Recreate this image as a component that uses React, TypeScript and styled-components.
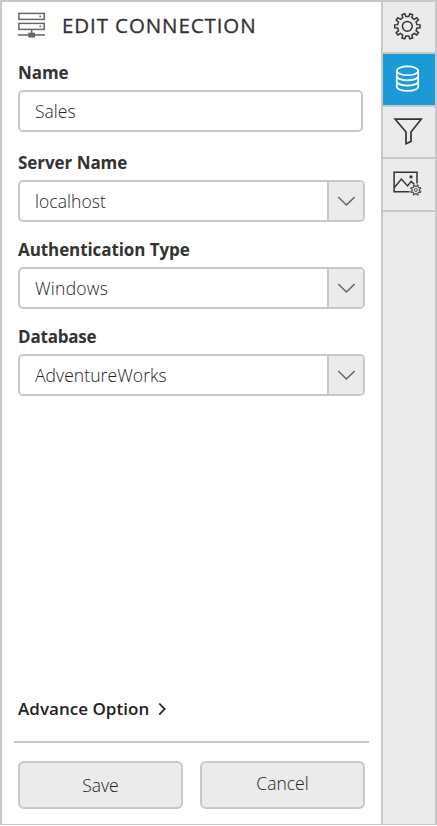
import React from "react";
import styled, { createGlobalStyle } from "styled-components";

const line = "#c8c8c8";
const fill = "#ebebeb";

const Global = createGlobalStyle`
  *, *::before, *::after { box-sizing: border-box; }
  body { margin: 0; background: #fff; font-family: "Open Sans", "Noto Sans", sans-serif; color: #333; }
  button { font: inherit; color: inherit; padding: 0; margin: 0; }
  svg { display: block; }
`;

const Frame = styled.div`
  display: flex;
  width: 437px;
  height: 825px;
  border: 2px solid ${line};
  border-bottom-width: 1px;
  background: #fff;
`;

const Panel = styled.main`
  width: 379px;
  display: flex;
  flex-direction: column;
`;

const Header = styled.header`
  display: flex;
  align-items: center;
  height: 47px;
  padding: 0 0 2px 16px;
  gap: 16px;
`;

const Title = styled.h1`
  margin: 0;
  font-size: 20.5px;
  line-height: 28px;
  font-weight: 400;
  letter-spacing: 0.9px;
  white-space: nowrap;
  -webkit-text-stroke: 0.3px #333;
`;

const Field = styled.div<{ $gap: number }>`
  padding: 0 14px 0 16px;
  margin-bottom: ${(p) => p.$gap}px;
`;

const Label = styled.label<{ $track: number }>`
  display: block;
  height: 41px;
  line-height: 48px;
  font-size: 17px;
  font-weight: 700;
  letter-spacing: ${(p) => p.$track}px;
  white-space: nowrap;
`;

const SelectLabel = styled(Label)`
  height: 45px;
  line-height: 55px;
`;

const Box = styled.div<{ $width: number }>`
  display: flex;
  width: ${(p) => p.$width}px;
  height: 42px;
  border: 2px solid ${line};
  border-radius: 5px;
  overflow: hidden;
`;

const Value = styled.span<{ $track: number }>`
  flex: 1;
  padding-left: 15px;
  line-height: 39px;
  font-size: 17.5px;
  font-weight: 300;
  color: #222;
  letter-spacing: ${(p) => p.$track}px;
  white-space: nowrap;
`;

const Arrow = styled.button`
  width: 36px;
  display: flex;
  align-items: center;
  justify-content: center;
  border: 0;
  border-left: 2px solid ${line};
  background: ${fill};
`;

const Spacer = styled.div`
  flex: 1;
`;

const Advance = styled.button`
  && {
    display: flex;
    align-items: center;
    align-self: flex-start;
    height: 30px;
    margin: 0 0 18px 16px;
    border: 0;
    background: none;
    font-size: 17px;
    font-weight: 600;
    letter-spacing: 0.03px;
    color: #222;
    gap: 9px;
    white-space: nowrap;
  }
`;

const Rule = styled.hr`
  width: 355px;
  height: 2px;
  margin: 0 0 0 12px;
  border: 0;
  background: ${line};
`;

const Actions = styled.footer`
  display: flex;
  gap: 17px;
  padding: 18px 0 15px 16px;
`;

const Action = styled.button<{ $lift: number }>`
  && {
    width: 165px;
    height: 48px;
    padding-bottom: ${(p) => p.$lift}px;
    border: 2px solid ${line};
    border-radius: 6px;
    background: ${fill};
    font-size: 17.5px;
    font-weight: 300;
    color: #222;
  }
`;

const Rail = styled.nav`
  width: 54px;
  border-left: 2px solid ${line};
  background: ${fill};
`;

const Tab = styled.button<{ $active?: boolean; $height: number; $lift: number }>`
  && {
    display: flex;
    width: 52px;
    height: ${(p) => p.$height}px;
    padding: 0 2px ${(p) => p.$lift}px 0;
    align-items: center;
    justify-content: center;
    border: 0;
    border-bottom: 2px solid ${line};
    background: ${(p) => (p.$active ? "#1a9ad7" : "transparent")};
  }
`;

function gearPath(cx: number, cy: number, teeth: number, outer: number, inner: number, tip: number) {
  const step = (Math.PI * 2) / teeth;
  const points: string[] = [];
  for (let i = 0; i < teeth; i++) {
    const mid = (i + 0.5) * step - Math.PI / 2;
    [[-0.27, inner], [-tip, outer], [tip, outer], [0.27, inner]].forEach(([t, r]) => {
      const a = mid + t * step;
      points.push(`${(cx + r * Math.cos(a)).toFixed(2)} ${(cy + r * Math.sin(a)).toFixed(2)}`);
    });
  }
  return `M${points.join("L")}Z`;
}

const ServerIcon = () => (
  <svg width="28" height="28" viewBox="0 0 28 28" fill="none" stroke="#666" strokeWidth="1.5">
    <rect x="0.9" y="2.4" width="25.3" height="6" />
    <rect x="0.9" y="12.4" width="25.3" height="6" />
    <path d="M13.7 18v5M0 24h27" />
    <path d="M21.4 4.5h1.6v1.6h-1.6zM21.4 14.5h1.6v1.6h-1.6z" fill="#666" stroke="none" />
    <rect x="10.2" y="21.7" width="6.8" height="4.8" fill="#666" stroke="none" />
  </svg>
);

const GearIcon = () => (
  <svg width="28" height="28" viewBox="0 0 28 28" fill="none" stroke="#333" strokeWidth="1.5">
    <path d={gearPath(13.3, 14.3, 10, 12.8, 9.8, 0.18)} />
    <circle cx="13.3" cy="14.3" r="4.9" />
  </svg>
);

const DatabaseIcon = () => (
  <svg width="26" height="28" viewBox="0 0 26 28" fill="none" stroke="#fff" strokeWidth="1.7">
    <ellipse cx="12.5" cy="5.8" rx="10.7" ry="4.4" />
    <path d="M1.8 5.8v16c0 2.3 4.8 4.1 10.7 4.1s10.7-1.8 10.7-4.1v-16" />
    <path d="M1.8 11.2c0 2.3 4.8 4.1 10.7 4.1s10.7-1.8 10.7-4.1M1.8 16.5c0 2.3 4.8 4.1 10.7 4.1s10.7-1.8 10.7-4.1" />
  </svg>
);

const FilterIcon = () => (
  <svg width="30" height="30" viewBox="0 0 30 30" fill="none" stroke="#333" strokeWidth="1.7">
    <path d="M2.2 2.2H28.2L18 15v9.5l-5 2.2V15Z" />
  </svg>
);

const PictureIcon = () => (
  <svg width="30" height="26" viewBox="0 0 30 26" fill="none" stroke="#333" strokeWidth="1.5">
    <path d="M16.5 21.8H1.1V2.2H24v11.2" />
    <path d="m1.6 17.3 6.8-8.2 6.2 6.8 3.6-4.5 3 2.9" />
    <circle cx="18" cy="6.8" r="0.9" fill="#333" />
    <path d={gearPath(22.8, 20, 8, 5.3, 3.7, 0.12)} stroke="#555" strokeWidth="1.1" />
    <circle cx="22.8" cy="20" r="1.5" stroke="#555" strokeWidth="1" />
  </svg>
);

const ChevronDown = () => (
  <svg width="18" height="12" viewBox="0 0 18 12" fill="none" stroke="#666" strokeWidth="1.5">
    <path d="m1.2 2 8.2 8 8.2-8" />
  </svg>
);

const ChevronRight = () => (
  <svg width="9" height="14" viewBox="0 0 9 14" fill="none" stroke="#222" strokeWidth="1.8">
    <path d="m1.3 2.5 5.3 5.5-5.3 5.5" />
  </svg>
);

const selects = [
  { label: "Server Name", value: "localhost", labelTrack: -0.05, track: 0.06 },
  { label: "Authentication Type", value: "Windows", labelTrack: -0.08, track: 0.25 },
  { label: "Database", value: "AdventureWorks", labelTrack: -0.2, track: 0.07 },
];

export default function App() {
  return (
    <>
      <Global />
      <Frame>
        <Panel>
          <Header>
            <ServerIcon />
            <Title>EDIT CONNECTION</Title>
          </Header>
          <Field $gap={3}>
            <Label $track={-0.1}>Name</Label>
            <Box $width={345}>
              <Value $track={0}>Sales</Value>
            </Box>
          </Field>
          {selects.map((s) => (
            <Field key={s.label} $gap={0}>
              <SelectLabel $track={s.labelTrack}>{s.label}</SelectLabel>
              <Box $width={347}>
                <Value $track={s.track}>{s.value}</Value>
                <Arrow aria-label={s.label}>
                  <ChevronDown />
                </Arrow>
              </Box>
            </Field>
          ))}
          <Spacer />
          <Advance>
            Advance Option
            <ChevronRight />
          </Advance>
          <Rule />
          <Actions>
            <Action $lift={0}>Save</Action>
            <Action $lift={4}>Cancel</Action>
          </Actions>
        </Panel>
        <Rail>
          <Tab $height={52} $lift={2} aria-label="Settings"><GearIcon /></Tab>
          <Tab $height={53} $lift={2} $active aria-label="Data"><DatabaseIcon /></Tab>
          <Tab $height={52} $lift={1} aria-label="Filter"><FilterIcon /></Tab>
          <Tab $height={53} $lift={4} aria-label="Image settings"><PictureIcon /></Tab>
        </Rail>
      </Frame>
    </>
  );
}
